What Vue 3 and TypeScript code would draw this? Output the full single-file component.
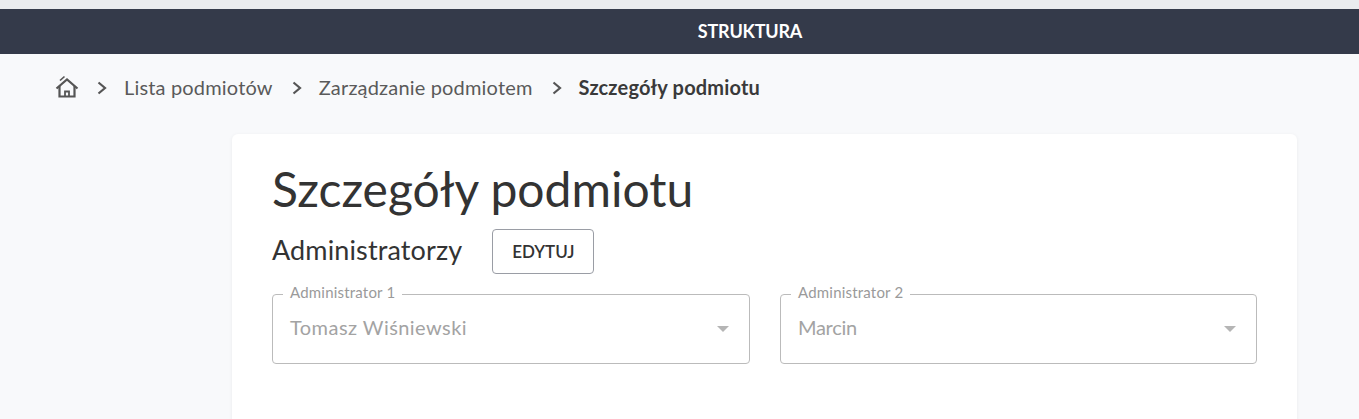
<script setup lang="ts">
const crumbs: string[] = ['Lista podmiotów', 'Zarządzanie podmiotem']
const admins = [
  { label: 'Administrator 1', value: 'Tomasz Wiśniewski', tracking: 0.45 },
  { label: 'Administrator 2', value: 'Marcin', tracking: -0.3 },
]
</script>

<template>
  <div class="page">
    <div class="strip"></div>
    <header class="bar">STRUKTURA</header>
    <nav class="crumbs">
      <svg class="home" width="24" height="24" viewBox="0 0 24 24" fill="none" stroke="#555" stroke-width="2.2">
        <path d="M1.5 13.500 12 4.500l10.500 9" />
        <path d="M4.500 11v10.500h15V11" />
        <path d="M10 21.500v-5h4v5" stroke-width="1.800" />
        <path d="M5 5.500 9.500 1.500" stroke-width="1.600" />
      </svg>
      <template v-for="c in crumbs" :key="c">
        <svg class="chev" width="10" height="14" viewBox="0 0 10 14" fill="none" stroke="#555" stroke-width="2.2"><path d="M1.500 1.500 8 7l-6.500 5.500" /></svg>
        <span class="crumb">{{ c }}</span>
      </template>
      <svg class="chev" width="10" height="14" viewBox="0 0 10 14" fill="none" stroke="#555" stroke-width="2.2"><path d="M1.500 1.500 8 7l-6.500 5.500" /></svg>
      <span class="crumb current">Szczegóły podmiotu</span>
    </nav>
    <main class="card">
      <h1 class="title">Szczegóły podmiotu</h1>
      <div class="section">
        <h2 class="subtitle">Administratorzy</h2>
        <button class="edit">EDYTUJ</button>
      </div>
      <div class="fields">
        <div v-for="a in admins" :key="a.label" class="field">
          <span class="label">{{ a.label }}</span>
          <span class="value" :style="{ letterSpacing: a.tracking + 'px' }">{{ a.value }}</span>
          <span class="arrow"></span>
        </div>
      </div>
    </main>
  </div>
</template>

<style>
html, body { margin: 0; background: #f8f9fb; overflow: hidden; }
</style>

<style scoped>
.page {
  height: 419px;
  overflow: hidden;
  font-family: "Lato", "Open Sans", sans-serif;
  color: #333;
  background: #f8f9fb;
}
.strip { height: 9px; background: #e9ebee; }
.bar {
  height: 45px;
  background: #343a4a;
  color: #fff;
  font-size: 18px;
  font-weight: 700;
  letter-spacing: -0.2px;
  display: flex;
  align-items: center;
  justify-content: center;
  padding: 0 0 2px 141px;
  box-sizing: border-box;
}
.crumbs {
  height: 68px;
  box-sizing: border-box;
  padding: 0 0 2px 55px;
  display: flex;
  align-items: center;
  font-size: 20px;
  letter-spacing: 0.17px;
  color: #5a5a5a;
}
.home { margin-right: 18px; }
.chev { margin: 2px 17px 0 0; }
.crumb { margin-right: 19px; }
.current { font-weight: 700; color: #3a3a3a; }
.card {
  margin: 12px 62px 0 232px;
  height: 300px;
  background: #fff;
  border-radius: 6px;
  padding: 22px 40px 0;
  box-shadow: 0 1px 4px rgba(0, 0, 0, 0.06);
}
.title {
  margin: 0;
  font-size: 48px;
  font-weight: 400;
  line-height: 66px;
  color: #333;
}
.section {
  display: flex;
  align-items: center;
  margin-top: 7px;
  height: 45px;
}
.subtitle {
  margin: 0 30px 0 0;
  font-size: 27px;
  font-weight: 400;
  letter-spacing: 0.13px;
  padding-bottom: 4px;
}
.edit {
  width: 102px;
  height: 45px;
  border: 1px solid #9a9da5;
  border-radius: 4px;
  background: #fff;
  color: #333;
  font: 600 17px "Lato", sans-serif;
}
.fields {
  display: grid;
  grid-template-columns: 478px 477px;
  column-gap: 30px;
  margin-top: 20px;
}
.field {
  position: relative;
  height: 70px;
  box-sizing: border-box;
  border: 1px solid #bbb;
  border-radius: 4px;
  display: flex;
  align-items: center;
  padding: 0 17px 4px;
}
.label {
  position: absolute;
  top: -11px;
  left: 10px;
  padding: 0 7px;
  background: #fff;
  font-size: 15px;
  line-height: 16px;
  letter-spacing: 0.2px;
  color: #9a9a9a;
}
.value {
  font-size: 20px;
  color: #a3a3a3;
}
.arrow {
  position: absolute;
  right: 20px;
  top: 31px;
  width: 0;
  height: 0;
  border-left: 6px solid transparent;
  border-right: 6px solid transparent;
  border-top: 6px solid #b5b5b5;
}
</style>
